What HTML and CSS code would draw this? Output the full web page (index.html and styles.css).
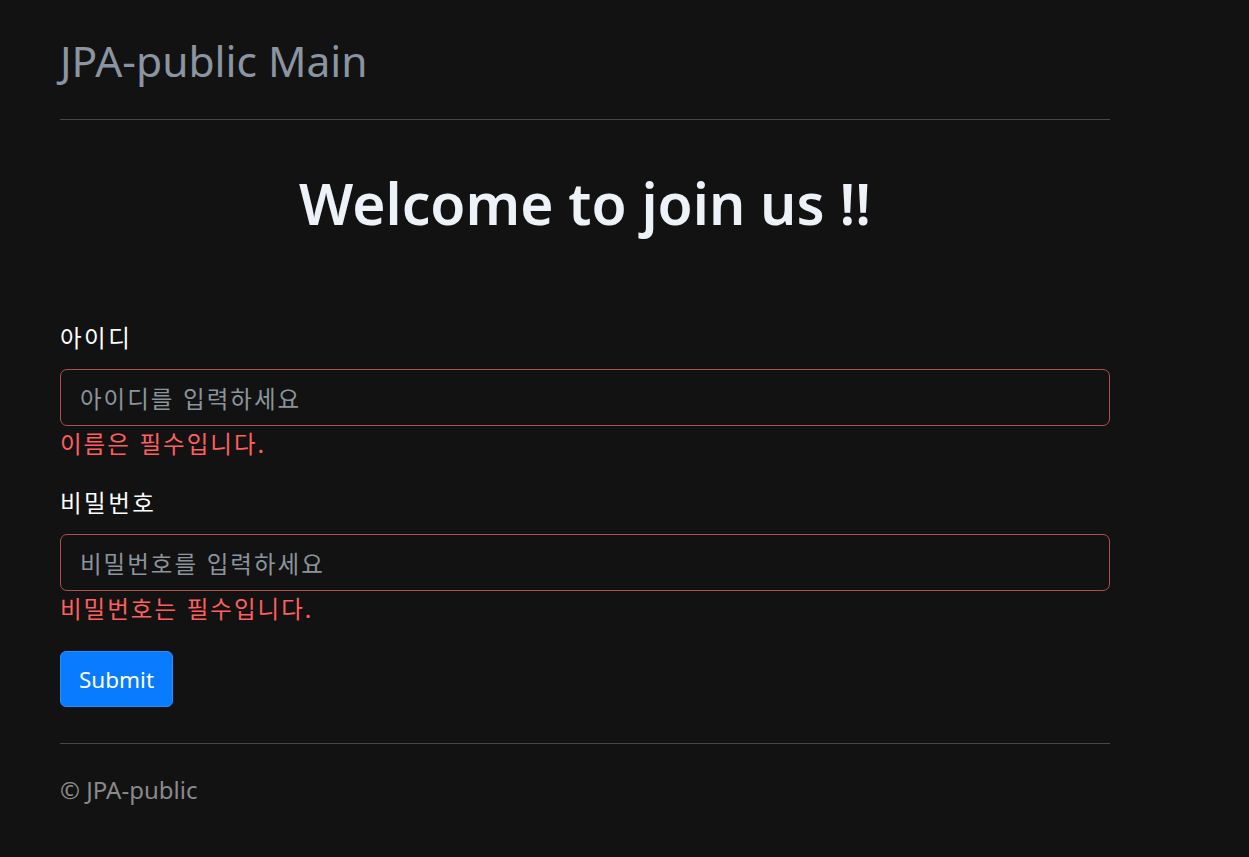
FILE: index.html
```html
<!DOCTYPE html>
<html lang="ko">
<head>
<meta charset="utf-8">
<title>JPA-public</title>
<link rel="stylesheet" href="styles.css">
</head>
<body>
<div class="page">
  <header class="site-header">
    <a class="brand" href="#">JPA-public Main</a>
  </header>
  <main class="content">
    <h1 class="welcome">Welcome to join us !!</h1>
    <form class="join-form">
      <div class="field">
        <label class="field-label" for="uid">아이디</label>
        <input class="field-input" id="uid" type="text" placeholder="아이디를 입력하세요">
        <div class="field-error">이름은 필수입니다.</div>
      </div>
      <div class="field">
        <label class="field-label" for="pwd">비밀번호</label>
        <input class="field-input" id="pwd" type="password" placeholder="비밀번호를 입력하세요">
        <div class="field-error">비밀번호는 필수입니다.</div>
      </div>
      <button class="submit-btn" type="button">Submit</button>
    </form>
  </main>
  <footer class="site-footer">
    <p class="copy">© JPA-public</p>
  </footer>
</div>
</body>
</html>
```

FILE: styles.css
```css
* { box-sizing: border-box; }
html, body { margin: 0; padding: 0; }
body {
  background: #121212;
  color: #f1f3f7;
  font-family: "Noto Sans", "Noto Sans CJK KR", sans-serif;
  height: 857px;
  overflow: hidden;
}
.page {
  width: 1110px;
  padding-left: 60px;
}
.site-header {
  border-bottom: 1px solid #464646;
  padding-top: 33px;
  height: 120px;
}
.brand {
  display: block;
  font-size: 42.5px;
  line-height: 56px;
  color: #8b95a1;
  text-decoration: none;
}
.welcome {
  margin: 43px 0 0;
  text-align: center;
  font-size: 57px;
  line-height: 80px;
  font-weight: 600;
  color: #edf1f8;
}
.join-form {
  margin-top: 77px;
  display: flex;
  flex-direction: column;
  align-items: flex-start;
}
.field {
  width: 100%;
  display: flex;
  flex-direction: column;
  margin-bottom: 25px;
}
.field-label {
  font-family: "Noto Sans CJK KR", sans-serif;
  font-size: 23.5px;
  line-height: 34px;
  letter-spacing: 2.5px;
  color: #ffffff;
  margin-bottom: 15px;
}
.field-input {
  height: 57px;
  border: 1px solid #b0504c;
  border-radius: 7px;
  background: #121212;
  padding: 0 19px;
  font-family: "Noto Sans CJK KR", sans-serif;
  font-size: 23.5px;
  letter-spacing: 2px;
  color: #fff;
  outline: none;
}
.field-input::placeholder { color: #8c949c; }
.field-error {
  font-family: "Noto Sans CJK KR", sans-serif;
  font-size: 23.5px;
  line-height: 34px;
  letter-spacing: 2px;
  color: #ff5f5f;
}
.submit-btn {
  margin-top: 1px;
  width: 113px;
  height: 56px;
  border: 1px solid #2b8bff;
  border-radius: 6px;
  background: #087bff;
  color: #fff;
  font-family: "Noto Sans", sans-serif;
  font-size: 22.5px;
  padding: 0;
}
.site-footer {
  margin-top: 36px;
  border-top: 1px solid #464646;
}
.copy {
  margin: 29px 0 0;
  font-size: 24px;
  line-height: 34px;
  color: #8a8a8a;
}
```
